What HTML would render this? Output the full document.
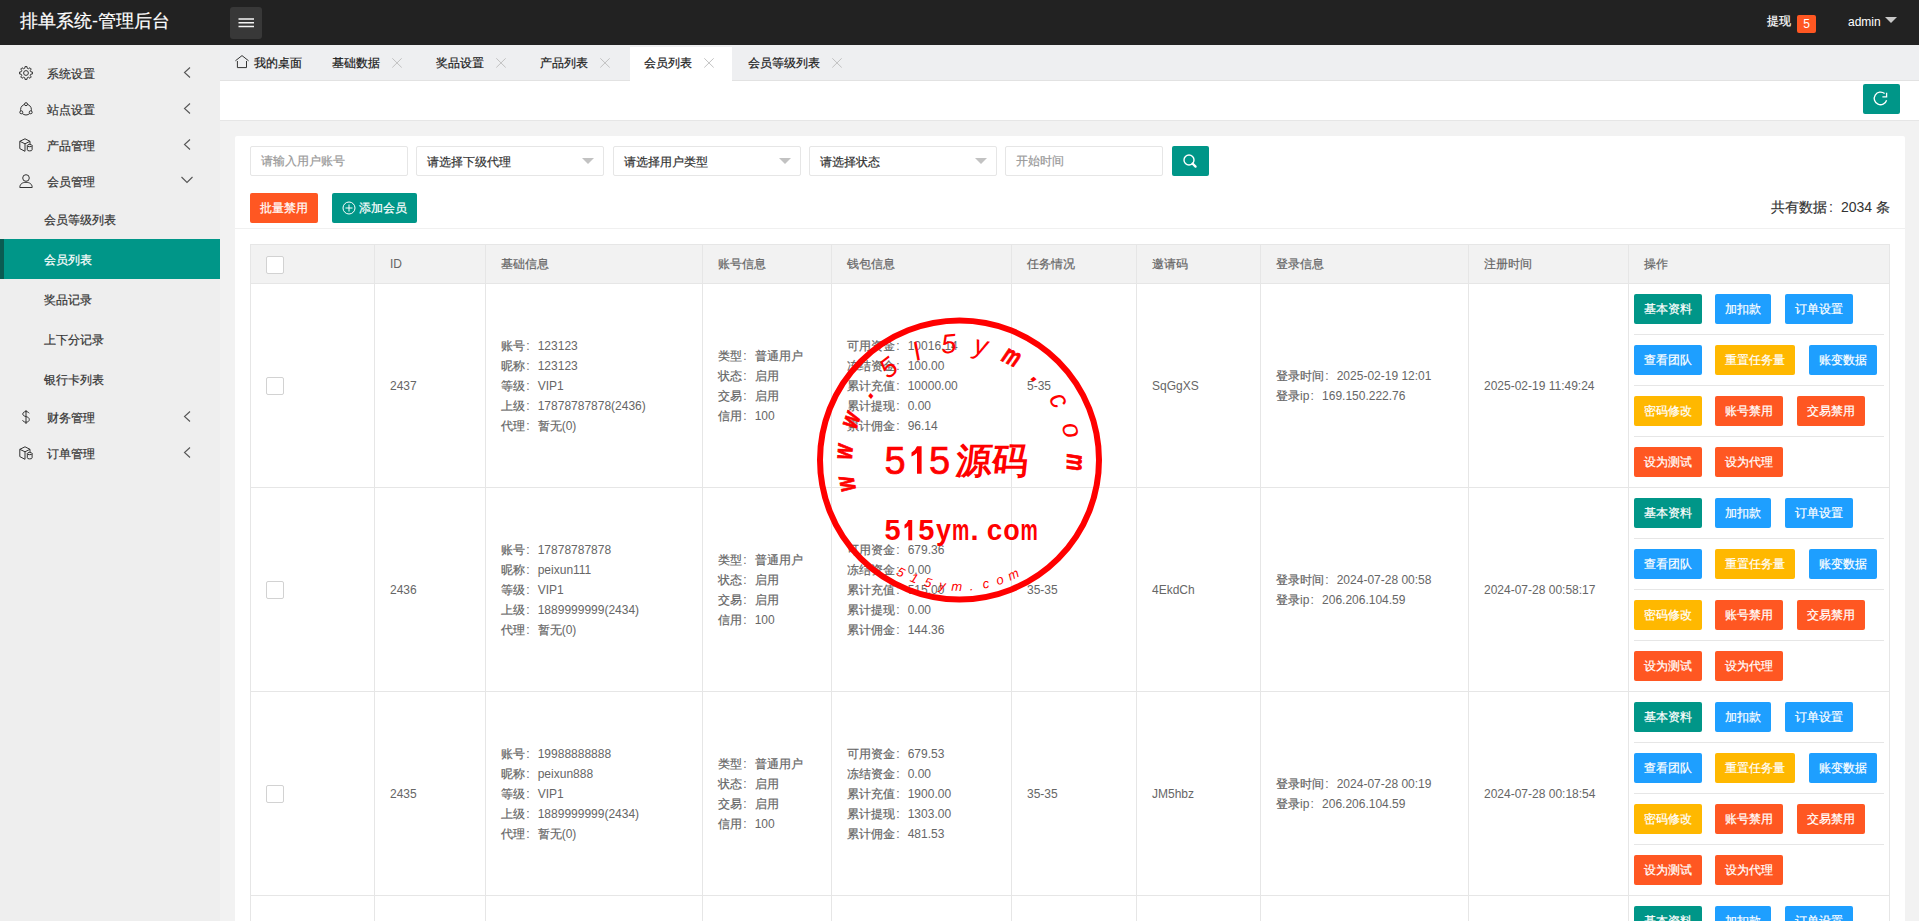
<!DOCTYPE html>
<html><head><meta charset="utf-8">
<style>
*{margin:0;padding:0;box-sizing:border-box}
html,body{width:1919px;height:921px;overflow:hidden}
body{position:relative;font-family:"Liberation Sans",sans-serif;font-size:12px;color:#666;background:#f2f2f2}
.abs{position:absolute}
.header{left:0;top:0;width:1919px;height:45px;background:#222}
.logo{left:20px;top:9px;line-height:24px;color:#fff;font-size:18px;white-space:nowrap}
.hamb{left:230px;top:7px;width:32px;height:32px;background:#383838;border-radius:3px}
.hamb i{position:absolute;left:8px;width:16px;height:2px;background:#fff}
.hr-txt{color:#fff;line-height:20px;top:11px}
.badge{left:1797px;top:15px;width:19px;height:18px;background:#FF5722;color:#fff;text-align:center;line-height:18px;border-radius:2px;font-size:12px}
.side{left:0;top:45px;width:220px;height:876px;background:#eee}
.mi{position:absolute;left:0;width:220px;height:36px;line-height:36px;color:#333}
.mi .t{position:absolute;left:47px;top:1px}
.mi svg.ic{position:absolute;left:19px;top:11px}
.mi svg.ar{position:absolute;left:183px;top:12px}
.si{position:absolute;left:0;width:220px;height:40px;line-height:40px;color:#333}
.si .t{position:absolute;left:44px;top:1px}
.si.on{background:#009688;color:#fff}
.si.on:before{content:"";position:absolute;left:0;top:0;width:4px;height:40px;background:#0a5b52}
.tabs{left:220px;top:45px;width:1699px;height:36px;background:#eeeff1;border-bottom:1px solid #e2e2e2}
.tab{position:absolute;top:1px;height:35px;line-height:34px;color:#1a1a1a;white-space:nowrap}
.tabon{position:absolute;left:410px;top:2px;width:102px;height:34px;background:#fff}
.tx{position:absolute;top:13px}
.bar{left:220px;top:81px;width:1699px;height:40px;background:#fff;border-bottom:1px solid #e6e6e6}
.refresh{left:1863px;top:84px;width:37px;height:30px;background:#009688;border-radius:2px}
.card{left:235px;top:136px;width:1670px;height:800px;background:#fff;border-radius:2px}
.inp{position:absolute;top:146px;height:30px;border:1px solid #e6e6e6;background:#fff;line-height:28px;padding-left:10px;color:#333;border-radius:2px;white-space:nowrap}
.inp.ph{color:#999}
.inp.sel{line-height:30px}
.inp .tri{position:absolute;right:9px;top:11px;width:0;height:0;border-left:6px solid transparent;border-right:6px solid transparent;border-top:6px solid #c2c2c2}
.btn{position:absolute;height:30px;line-height:30px;color:#fff;text-align:center;border-radius:2px;white-space:nowrap}
.g{background:#009688}.b{background:#1E9FFF}.o{background:#FFB800}.r{background:#FF5722}
.sep{left:235px;top:228px;width:1670px;height:1px;background:#f0f0f0}
.total{left:1500px;top:198px;width:390px;text-align:right;font-size:14px;color:#333;line-height:18px}
table{position:absolute;left:250px;top:244px;border-collapse:collapse;table-layout:fixed;width:1640px}
td,th{border:1px solid #e6e6e6;padding:0 15px;text-align:left;font-weight:normal;vertical-align:middle;line-height:20px;color:#666;font-size:12px;white-space:nowrap}
th{background:#f2f2f2;height:39px}
td{height:204px}
.cb{display:inline-block;width:18px;height:18px;border:1px solid #d2d2d2;border-radius:2px;background:#fff;vertical-align:middle}
td.ops{padding:10px 5px 0 5px;vertical-align:top}
.opr{height:51px;position:relative}
.opr:after{content:"";position:absolute;left:0;right:0;top:40px;height:1px;background:#e6e6e6}
.opr:last-child{height:30px}
.opr:last-child:after{display:none}
.opr .btn{top:0}
.stamp{left:0;top:0}
.cl{font-weight:normal;display:inline-block;width:12.7px;padding-left:1.2px;text-align:left}
.z{font-style:normal;-webkit-text-stroke:0.2px currentColor}
</style></head><body>
<div class="abs header">
  <div class="abs logo"><i class="z">排单系统</i>-<i class="z">管理后台</i></div>
  <div class="abs hamb"><svg class="abs" style="left:0;top:0" width="32" height="32" viewBox="0 0 32 32"><path d="M8.5 12H24M8.5 15.8H24M8.5 19.5H24" stroke="#fff" stroke-width="1.5" opacity="0.95"/></svg></div>
  <div class="abs hr-txt" style="left:1767px"><i class="z">提现</i></div>
  <div class="abs badge">5</div>
  <div class="abs hr-txt" style="left:1848px;top:12px">admin</div>
  <div class="abs" style="left:1885px;top:17px;width:0;height:0;border-left:6px solid transparent;border-right:6px solid transparent;border-top:6px solid #c8c8c8"></div>
</div>
<div class="abs side">
 <div class="mi" style="top:10px"><svg class="ic" width="14" height="14" viewBox="0 0 14 14"><path d="M11.87 5.88 L13.54 6.08 L13.54 7.92 L11.87 8.12 L11.24 9.65 L12.27 10.97 L10.97 12.27 L9.65 11.24 L8.12 11.87 L7.92 13.54 L6.08 13.54 L5.88 11.87 L4.35 11.24 L3.03 12.27 L1.73 10.97 L2.76 9.65 L2.13 8.12 L0.46 7.92 L0.46 6.08 L2.13 5.88 L2.76 4.35 L1.73 3.03 L3.03 1.73 L4.35 2.76 L5.88 2.13 L6.08 0.46 L7.92 0.46 L8.12 2.13 L9.65 2.76 L10.97 1.73 L12.27 3.03 L11.24 4.35Z" fill="none" stroke="#333" stroke-width="1"/><circle cx="7" cy="7" r="2.4" fill="none" stroke="#333" stroke-width="1"/></svg><span class="t"><i class="z">系统设置</i></span><svg class="ar" width="8" height="11" viewBox="0 0 8 11"><path d="M7 0.5L1.5 5.5L7 10.5" fill="none" stroke="#555" stroke-width="1.1"/></svg></div>
 <div class="mi" style="top:46px"><svg class="ic" width="14" height="14" viewBox="0 0 14 14"><circle cx="7" cy="7.6" r="5.4" fill="none" stroke="#333" stroke-width="1"/><circle cx="7" cy="2.2" r="1.5" fill="#eee" stroke="#333" stroke-width="1"/><circle cx="2.3" cy="10.3" r="1.5" fill="#eee" stroke="#333" stroke-width="1"/><circle cx="11.7" cy="10.3" r="1.5" fill="#eee" stroke="#333" stroke-width="1"/></svg><span class="t"><i class="z">站点设置</i></span><svg class="ar" width="8" height="11" viewBox="0 0 8 11"><path d="M7 0.5L1.5 5.5L7 10.5" fill="none" stroke="#555" stroke-width="1.1"/></svg></div>
 <div class="mi" style="top:82px"><svg class="ic" width="14" height="14" viewBox="0 0 14 14"><path d="M6 0.8L11 3.3L6 5.8L0.8 3.3Z M0.8 3.3V10.6L6 13.3V5.8 M11 3.3V6.5" fill="none" stroke="#333" stroke-width="1" stroke-linejoin="round"/><path d="M8.3 7.6V11.8A2.4 1.1 0 0 0 13.1 11.8V7.6" fill="#eee" stroke="#333" stroke-width="1"/><ellipse cx="10.7" cy="7.6" rx="2.4" ry="1.1" fill="#eee" stroke="#333" stroke-width="1"/></svg><span class="t"><i class="z">产品管理</i></span><svg class="ar" width="8" height="11" viewBox="0 0 8 11"><path d="M7 0.5L1.5 5.5L7 10.5" fill="none" stroke="#555" stroke-width="1.1"/></svg></div>
 <div class="mi" style="top:118px"><svg class="ic" width="14" height="14" viewBox="0 0 14 14"><circle cx="7" cy="4" r="3.3" fill="none" stroke="#333" stroke-width="1"/><path d="M0.8 13.5C0.8 9.8 3.8 8.3 7 8.3C10.2 8.3 13.2 9.8 13.2 13.5Z" fill="none" stroke="#333" stroke-width="1" stroke-linejoin="round"/></svg><span class="t"><i class="z">会员管理</i></span><svg class="ar" width="12" height="8" viewBox="0 0 12 8" style="left:181px;top:13px"><path d="M0.5 1L6 6.5L11.5 1" fill="none" stroke="#555" stroke-width="1.1"/></svg></div>
 <div class="si" style="top:154px"><span class="t"><i class="z">会员等级列表</i></span></div>
 <div class="si on" style="top:194px"><span class="t"><i class="z">会员列表</i></span></div>
 <div class="si" style="top:234px"><span class="t"><i class="z">奖品记录</i></span></div>
 <div class="si" style="top:274px"><span class="t"><i class="z">上下分记录</i></span></div>
 <div class="si" style="top:314px"><span class="t"><i class="z">银行卡列表</i></span></div>
 <div class="mi" style="top:354px"><svg class="ic" width="14" height="14" viewBox="0 0 14 14"><path d="M10.2 3.3C9.6 2.2 8.4 1.6 7 1.6C5.1 1.6 3.8 2.6 3.8 4C3.8 5.5 5.2 6.1 7 6.6C8.9 7.1 10.3 7.8 10.3 9.6C10.3 11.1 8.9 12.2 7 12.2C5.3 12.2 4 11.4 3.6 10.2M7 0V14" fill="none" stroke="#333" stroke-width="1"/></svg><span class="t"><i class="z">财务管理</i></span><svg class="ar" width="8" height="11" viewBox="0 0 8 11"><path d="M7 0.5L1.5 5.5L7 10.5" fill="none" stroke="#555" stroke-width="1.1"/></svg></div>
 <div class="mi" style="top:390px"><svg class="ic" width="14" height="14" viewBox="0 0 14 14"><path d="M6 0.8L11 3.3L6 5.8L0.8 3.3Z M0.8 3.3V10.6L6 13.3V5.8 M11 3.3V6.5" fill="none" stroke="#333" stroke-width="1" stroke-linejoin="round"/><path d="M8.3 7.6V11.8A2.4 1.1 0 0 0 13.1 11.8V7.6" fill="#eee" stroke="#333" stroke-width="1"/><ellipse cx="10.7" cy="7.6" rx="2.4" ry="1.1" fill="#eee" stroke="#333" stroke-width="1"/></svg><span class="t"><i class="z">订单管理</i></span><svg class="ar" width="8" height="11" viewBox="0 0 8 11"><path d="M7 0.5L1.5 5.5L7 10.5" fill="none" stroke="#555" stroke-width="1.1"/></svg></div>
</div>
<div class="abs tabs">
 <div class="tabon"></div>
 <svg class="abs" style="left:15px;top:10px" width="14" height="14" viewBox="0 0 14 14"><path d="M0.4 5.8L7 0.6L13.6 5.8M2.4 6V12.6H11.5V6" fill="none" stroke="#333" stroke-width="1"/></svg>
 <span class="tab" style="left:34px"><i class="z">我的桌面</i></span>
 <span class="tab" style="left:112px"><i class="z">基础数据</i></span><svg class="abs tx" style="left:172px" width="10" height="10" viewBox="0 0 10 10"><path d="M0.3 0.3L9.7 9.5M9.7 0.3L0.3 9.5" stroke="#bbb" stroke-width="0.9"/></svg>
 <span class="tab" style="left:216px"><i class="z">奖品设置</i></span><svg class="abs tx" style="left:276px" width="10" height="10" viewBox="0 0 10 10"><path d="M0.3 0.3L9.7 9.5M9.7 0.3L0.3 9.5" stroke="#bbb" stroke-width="0.9"/></svg>
 <span class="tab" style="left:320px"><i class="z">产品列表</i></span><svg class="abs tx" style="left:380px" width="10" height="10" viewBox="0 0 10 10"><path d="M0.3 0.3L9.7 9.5M9.7 0.3L0.3 9.5" stroke="#bbb" stroke-width="0.9"/></svg>
 <span class="tab" style="left:424px"><i class="z">会员列表</i></span><svg class="abs tx" style="left:484px" width="10" height="10" viewBox="0 0 10 10"><path d="M0.3 0.3L9.7 9.5M9.7 0.3L0.3 9.5" stroke="#bbb" stroke-width="0.9"/></svg>
 <span class="tab" style="left:528px"><i class="z">会员等级列表</i></span><svg class="abs tx" style="left:612px" width="10" height="10" viewBox="0 0 10 10"><path d="M0.3 0.3L9.7 9.5M9.7 0.3L0.3 9.5" stroke="#bbb" stroke-width="0.9"/></svg>
</div>
<div class="abs bar"></div>
<div class="abs refresh"><svg class="abs" style="left:0;top:0" width="37" height="30" viewBox="0 0 37 30"><path d="M23.6 16.2A6.3 6.3 0 1 1 21.6 9.6" fill="none" stroke="#fff" stroke-width="1.3"/><path d="M23.6 8.8V12.8H19.4" fill="none" stroke="#fff" stroke-width="1.3"/></svg></div>
<div class="abs card"></div>
<div class="inp ph" style="left:250px;width:158px"><i class="z">请输入用户账号</i></div>
<div class="inp sel" style="left:416px;width:188px"><i class="z">请选择下级代理</i><i class="tri"></i></div>
<div class="inp sel" style="left:613px;width:188px"><i class="z">请选择用户类型</i><i class="tri"></i></div>
<div class="inp sel" style="left:809px;width:188px"><i class="z">请选择状态</i><i class="tri"></i></div>
<div class="inp ph" style="left:1005px;width:158px"><i class="z">开始时间</i></div>
<div class="btn g" style="left:1172px;top:146px;width:37px"><svg class="abs" style="left:10px;top:7px" width="16" height="16" viewBox="0 0 16 16"><circle cx="7" cy="7" r="5" fill="none" stroke="#fff" stroke-width="1.4"/><path d="M10.6 10.6L13.6 13.6" stroke="#fff" stroke-width="2.2" stroke-linecap="round"/></svg></div>
<div class="btn r" style="left:250px;top:193px;width:68px"><i class="z">批量禁用</i></div>
<div class="btn g" style="left:332px;top:193px;width:85px"><svg class="abs" style="left:10px;top:8px" width="14" height="14" viewBox="0 0 14 14"><circle cx="7" cy="7" r="6" fill="none" stroke="#fff" stroke-width="1"/><path d="M7 3.5V10.5M3.5 7H10.5" stroke="#fff" stroke-width="1"/></svg><span style="position:absolute;left:27px"><i class="z">添加会员</i></span></div>
<div class="abs sep"></div>
<div class="abs total"><i class="z">共有数据</i><b class="cl" style="width:14px;padding-left:2px">:</b>2034 <i class="z">条</i></div>
<table>
<colgroup><col style="width:124px"><col style="width:111px"><col style="width:217px"><col style="width:129px"><col style="width:180px"><col style="width:125px"><col style="width:124px"><col style="width:208px"><col style="width:160px"><col style="width:261px"></colgroup>
<tr><th><span class="cb"></span></th><th>ID</th><th><i class="z">基础信息</i></th><th><i class="z">账号信息</i></th><th><i class="z">钱包信息</i></th><th><i class="z">任务情况</i></th><th><i class="z">邀请码</i></th><th><i class="z">登录信息</i></th><th><i class="z">注册时间</i></th><th><i class="z">操作</i></th></tr>
<tr><td><span class="cb"></span></td><td>2437</td><td><i class="z">账号</i><b class="cl">:</b>123123<br><i class="z">昵称</i><b class="cl">:</b>123123<br><i class="z">等级</i><b class="cl">:</b>VIP1<br><i class="z">上级</i><b class="cl">:</b>17878787878(2436)<br><i class="z">代理</i><b class="cl">:</b><i class="z">暂无</i>(0)</td><td><i class="z">类型</i><b class="cl">:</b><i class="z">普通用户</i><br><i class="z">状态</i><b class="cl">:</b><i class="z">启用</i><br><i class="z">交易</i><b class="cl">:</b><i class="z">启用</i><br><i class="z">信用</i><b class="cl">:</b>100</td><td><i class="z">可用资金</i><b class="cl">:</b>10016.14<br><i class="z">冻结资金</i><b class="cl">:</b>100.00<br><i class="z">累计充值</i><b class="cl">:</b>10000.00<br><i class="z">累计提现</i><b class="cl">:</b>0.00<br><i class="z">累计佣金</i><b class="cl">:</b>96.14</td><td>5-35</td><td>SqGgXS</td><td><i class="z">登录时间</i><b class="cl">:</b>2025-02-19 12:01<br><i class="z">登录</i>ip<b class="cl">:</b>169.150.222.76</td><td>2025-02-19 11:49:24</td><td class="ops"><div class="opr"><span class="btn g" style="left:0;width:68px"><i class="z">基本资料</i></span><span class="btn b" style="left:81px;width:56px"><i class="z">加扣款</i></span><span class="btn b" style="left:151px;width:68px"><i class="z">订单设置</i></span></div><div class="opr"><span class="btn b" style="left:0;width:68px"><i class="z">查看团队</i></span><span class="btn o" style="left:81px;width:80px"><i class="z">重置任务量</i></span><span class="btn b" style="left:175px;width:68px"><i class="z">账变数据</i></span></div><div class="opr"><span class="btn o" style="left:0;width:68px"><i class="z">密码修改</i></span><span class="btn r" style="left:81px;width:68px"><i class="z">账号禁用</i></span><span class="btn r" style="left:163px;width:68px"><i class="z">交易禁用</i></span></div><div class="opr"><span class="btn r" style="left:0;width:68px"><i class="z">设为测试</i></span><span class="btn r" style="left:81px;width:68px"><i class="z">设为代理</i></span></div></td></tr>
<tr><td><span class="cb"></span></td><td>2436</td><td><i class="z">账号</i><b class="cl">:</b>17878787878<br><i class="z">昵称</i><b class="cl">:</b>peixun111<br><i class="z">等级</i><b class="cl">:</b>VIP1<br><i class="z">上级</i><b class="cl">:</b>1889999999(2434)<br><i class="z">代理</i><b class="cl">:</b><i class="z">暂无</i>(0)</td><td><i class="z">类型</i><b class="cl">:</b><i class="z">普通用户</i><br><i class="z">状态</i><b class="cl">:</b><i class="z">启用</i><br><i class="z">交易</i><b class="cl">:</b><i class="z">启用</i><br><i class="z">信用</i><b class="cl">:</b>100</td><td><i class="z">可用资金</i><b class="cl">:</b>679.36<br><i class="z">冻结资金</i><b class="cl">:</b>0.00<br><i class="z">累计充值</i><b class="cl">:</b>515.00<br><i class="z">累计提现</i><b class="cl">:</b>0.00<br><i class="z">累计佣金</i><b class="cl">:</b>144.36</td><td>35-35</td><td>4EkdCh</td><td><i class="z">登录时间</i><b class="cl">:</b>2024-07-28 00:58<br><i class="z">登录</i>ip<b class="cl">:</b>206.206.104.59</td><td>2024-07-28 00:58:17</td><td class="ops"><div class="opr"><span class="btn g" style="left:0;width:68px"><i class="z">基本资料</i></span><span class="btn b" style="left:81px;width:56px"><i class="z">加扣款</i></span><span class="btn b" style="left:151px;width:68px"><i class="z">订单设置</i></span></div><div class="opr"><span class="btn b" style="left:0;width:68px"><i class="z">查看团队</i></span><span class="btn o" style="left:81px;width:80px"><i class="z">重置任务量</i></span><span class="btn b" style="left:175px;width:68px"><i class="z">账变数据</i></span></div><div class="opr"><span class="btn o" style="left:0;width:68px"><i class="z">密码修改</i></span><span class="btn r" style="left:81px;width:68px"><i class="z">账号禁用</i></span><span class="btn r" style="left:163px;width:68px"><i class="z">交易禁用</i></span></div><div class="opr"><span class="btn r" style="left:0;width:68px"><i class="z">设为测试</i></span><span class="btn r" style="left:81px;width:68px"><i class="z">设为代理</i></span></div></td></tr>
<tr><td><span class="cb"></span></td><td>2435</td><td><i class="z">账号</i><b class="cl">:</b>19988888888<br><i class="z">昵称</i><b class="cl">:</b>peixun888<br><i class="z">等级</i><b class="cl">:</b>VIP1<br><i class="z">上级</i><b class="cl">:</b>1889999999(2434)<br><i class="z">代理</i><b class="cl">:</b><i class="z">暂无</i>(0)</td><td><i class="z">类型</i><b class="cl">:</b><i class="z">普通用户</i><br><i class="z">状态</i><b class="cl">:</b><i class="z">启用</i><br><i class="z">交易</i><b class="cl">:</b><i class="z">启用</i><br><i class="z">信用</i><b class="cl">:</b>100</td><td><i class="z">可用资金</i><b class="cl">:</b>679.53<br><i class="z">冻结资金</i><b class="cl">:</b>0.00<br><i class="z">累计充值</i><b class="cl">:</b>1900.00<br><i class="z">累计提现</i><b class="cl">:</b>1303.00<br><i class="z">累计佣金</i><b class="cl">:</b>481.53</td><td>35-35</td><td>JM5hbz</td><td><i class="z">登录时间</i><b class="cl">:</b>2024-07-28 00:19<br><i class="z">登录</i>ip<b class="cl">:</b>206.206.104.59</td><td>2024-07-28 00:18:54</td><td class="ops"><div class="opr"><span class="btn g" style="left:0;width:68px"><i class="z">基本资料</i></span><span class="btn b" style="left:81px;width:56px"><i class="z">加扣款</i></span><span class="btn b" style="left:151px;width:68px"><i class="z">订单设置</i></span></div><div class="opr"><span class="btn b" style="left:0;width:68px"><i class="z">查看团队</i></span><span class="btn o" style="left:81px;width:80px"><i class="z">重置任务量</i></span><span class="btn b" style="left:175px;width:68px"><i class="z">账变数据</i></span></div><div class="opr"><span class="btn o" style="left:0;width:68px"><i class="z">密码修改</i></span><span class="btn r" style="left:81px;width:68px"><i class="z">账号禁用</i></span><span class="btn r" style="left:163px;width:68px"><i class="z">交易禁用</i></span></div><div class="opr"><span class="btn r" style="left:0;width:68px"><i class="z">设为测试</i></span><span class="btn r" style="left:81px;width:68px"><i class="z">设为代理</i></span></div></td></tr>
<tr><td><span class="cb"></span></td><td>2434</td><td><i class="z">账号</i><b class="cl">:</b>1889999999<br><i class="z">昵称</i><b class="cl">:</b>peixun<br><i class="z">等级</i><b class="cl">:</b>VIP1<br><i class="z">上级</i><b class="cl">:</b><i class="z">暂无</i><br><i class="z">代理</i><b class="cl">:</b><i class="z">暂无</i>(0)</td><td><i class="z">类型</i><b class="cl">:</b><i class="z">普通用户</i><br><i class="z">状态</i><b class="cl">:</b><i class="z">启用</i><br><i class="z">交易</i><b class="cl">:</b><i class="z">启用</i><br><i class="z">信用</i><b class="cl">:</b>100</td><td><i class="z">可用资金</i><b class="cl">:</b>0.00<br><i class="z">冻结资金</i><b class="cl">:</b>0.00<br><i class="z">累计充值</i><b class="cl">:</b>0.00<br><i class="z">累计提现</i><b class="cl">:</b>0.00<br><i class="z">累计佣金</i><b class="cl">:</b>0.00</td><td>0-35</td><td>AbCdEf</td><td><i class="z">登录时间</i><b class="cl">:</b>2024-07-28 00:10<br><i class="z">登录</i>ip<b class="cl">:</b>206.206.104.59</td><td>2024-07-28 00:10:00</td><td class="ops"><div class="opr"><span class="btn g" style="left:0;width:68px"><i class="z">基本资料</i></span><span class="btn b" style="left:81px;width:56px"><i class="z">加扣款</i></span><span class="btn b" style="left:151px;width:68px"><i class="z">订单设置</i></span></div><div class="opr"><span class="btn b" style="left:0;width:68px"><i class="z">查看团队</i></span><span class="btn o" style="left:81px;width:80px"><i class="z">重置任务量</i></span><span class="btn b" style="left:175px;width:68px"><i class="z">账变数据</i></span></div><div class="opr"><span class="btn o" style="left:0;width:68px"><i class="z">密码修改</i></span><span class="btn r" style="left:81px;width:68px"><i class="z">账号禁用</i></span><span class="btn r" style="left:163px;width:68px"><i class="z">交易禁用</i></span></div><div class="opr"><span class="btn r" style="left:0;width:68px"><i class="z">设为测试</i></span><span class="btn r" style="left:81px;width:68px"><i class="z">设为代理</i></span></div></td></tr>
</table><svg class="abs" style="left:0;top:0;pointer-events:none" width="1919" height="921" viewBox="0 0 1919 921">
<circle cx="959.5" cy="460.0" r="139.5" fill="none" stroke="#f00" stroke-width="6"/>
<text transform="translate(854.35 482.35) rotate(258.00) scale(0.70 1)" text-anchor="middle" font-family="Liberation Sans" font-style="italic" font-weight="bold" font-size="27" fill="#f00" stroke="#f00" stroke-width="0.9">w</text>
<text transform="translate(852.28 452.31) rotate(274.10) scale(0.70 1)" text-anchor="middle" font-family="Liberation Sans" font-style="italic" font-weight="bold" font-size="27" fill="#f00" stroke="#f00" stroke-width="0.9">w</text>
<text transform="translate(858.61 422.88) rotate(290.20) scale(0.70 1)" text-anchor="middle" font-family="Liberation Sans" font-style="italic" font-weight="bold" font-size="27" fill="#f00" stroke="#f00" stroke-width="0.9">w</text>
<text transform="translate(872.86 396.36) rotate(306.30) scale(1.00 1)" text-anchor="middle" font-family="Liberation Sans" font-style="italic" font-weight="bold" font-size="27" fill="#f00">.</text>
<text transform="translate(893.91 374.83) rotate(322.40) scale(1.00 1)" text-anchor="middle" font-family="Liberation Sans" font-style="italic" font-weight="normal" font-size="27" fill="#f00">5</text>
<text transform="translate(920.10 359.98) rotate(338.50) scale(1.00 1)" text-anchor="middle" font-family="Liberation Sans" font-style="italic" font-weight="normal" font-size="27" fill="#f00">I</text>
<text transform="translate(949.38 352.98) rotate(354.60) scale(1.00 1)" text-anchor="middle" font-family="Liberation Sans" font-style="italic" font-weight="normal" font-size="27" fill="#f00">5</text>
<text transform="translate(979.46 354.37) rotate(370.70) scale(1.00 1)" text-anchor="middle" font-family="Liberation Sans" font-style="italic" font-weight="normal" font-size="27" fill="#f00">y</text>
<text transform="translate(1007.97 364.05) rotate(386.80) scale(0.70 1)" text-anchor="middle" font-family="Liberation Sans" font-style="italic" font-weight="bold" font-size="27" fill="#f00" stroke="#f00" stroke-width="0.9">m</text>
<text transform="translate(1032.68 381.25) rotate(402.90) scale(1.00 1)" text-anchor="middle" font-family="Liberation Sans" font-style="italic" font-weight="bold" font-size="27" fill="#f00">.</text>
<text transform="translate(1051.65 404.63) rotate(419.00) scale(1.00 1)" text-anchor="middle" font-family="Liberation Sans" font-style="italic" font-weight="normal" font-size="27" fill="#f00">c</text>
<text transform="translate(1063.39 432.36) rotate(435.10) scale(1.00 1)" text-anchor="middle" font-family="Liberation Sans" font-style="italic" font-weight="normal" font-size="27" fill="#f00">o</text>
<text transform="translate(1066.98 462.25) rotate(451.20) scale(0.70 1)" text-anchor="middle" font-family="Liberation Sans" font-style="italic" font-weight="bold" font-size="27" fill="#f00" stroke="#f00" stroke-width="0.9">m</text>
<text x="884.6" y="473.6" font-family="Liberation Sans" font-size="38" fill="#f00" stroke="#f00" stroke-width="0.7">5</text>
<path d="M917 446.3H921.6V473.8H917V453Q914.6 455.2 911.5 456.6V452.4Q915.6 450.2 917 446.3Z" fill="#f00"/>
<text x="929" y="473.6" font-family="Liberation Sans" font-size="38" fill="#f00" stroke="#f00" stroke-width="0.7">5</text>
<text x="955" y="473" font-family="Liberation Serif" font-size="36" font-weight="bold" fill="#f00" transform="translate(0 473) skewX(-6) translate(0 -473)">源码</text>
<text transform="translate(892.5 540.3) scale(1.00 1)" text-anchor="middle" font-family="Liberation Sans" font-weight="bold" font-size="29" fill="#f00">5</text>
<path d="M908.3 520H912.2V540.3H908.3V526Q906.5 527.6 904.5 528.4V524.8Q907 523.5 908.3 520Z" fill="#f00"/>
<text transform="translate(926.3 540.3) scale(1.00 1)" text-anchor="middle" font-family="Liberation Sans" font-weight="bold" font-size="29" fill="#f00">5</text>
<text transform="translate(943.4 540.3) scale(0.93 1)" text-anchor="middle" font-family="Liberation Sans" font-weight="bold" font-size="29" fill="#f00">y</text>
<text transform="translate(960.6 540.3) scale(0.67 1)" text-anchor="middle" font-family="Liberation Sans" font-weight="bold" font-size="29" fill="#f00">m</text>
<text transform="translate(974.6 540.3) scale(1.00 1)" text-anchor="middle" font-family="Liberation Sans" font-weight="bold" font-size="29" fill="#f00">.</text>
<text transform="translate(994.6 540.3) scale(0.96 1)" text-anchor="middle" font-family="Liberation Sans" font-weight="bold" font-size="29" fill="#f00">c</text>
<text transform="translate(1011.6 540.3) scale(0.93 1)" text-anchor="middle" font-family="Liberation Sans" font-weight="bold" font-size="29" fill="#f00">o</text>
<text transform="translate(1029.2 540.3) scale(0.67 1)" text-anchor="middle" font-family="Liberation Sans" font-weight="bold" font-size="29" fill="#f00">m</text>
<text transform="translate(898.81 576.09) rotate(27.60)" text-anchor="middle" font-family="Liberation Sans" font-style="italic" font-size="13" fill="#f00">5</text>
<text transform="translate(912.55 582.30) rotate(21.00)" text-anchor="middle" font-family="Liberation Sans" font-style="italic" font-size="13" fill="#f00">1</text>
<text transform="translate(926.92 586.88) rotate(14.40)" text-anchor="middle" font-family="Liberation Sans" font-style="italic" font-size="13" fill="#f00">5</text>
<text transform="translate(941.72 589.79) rotate(7.80)" text-anchor="middle" font-family="Liberation Sans" font-style="italic" font-size="13" fill="#f00">y</text>
<text transform="translate(956.76 590.97) rotate(1.20)" text-anchor="middle" font-family="Liberation Sans" font-style="italic" font-size="13" fill="#f00">m</text>
<text transform="translate(971.83 590.42) rotate(-5.40)" text-anchor="middle" font-family="Liberation Sans" font-style="italic" font-size="13" fill="#f00">.</text>
<text transform="translate(986.74 588.14) rotate(-12.00)" text-anchor="middle" font-family="Liberation Sans" font-style="italic" font-size="13" fill="#f00">c</text>
<text transform="translate(1001.28 584.16) rotate(-18.60)" text-anchor="middle" font-family="Liberation Sans" font-style="italic" font-size="13" fill="#f00">o</text>
<text transform="translate(1015.28 578.53) rotate(-25.20)" text-anchor="middle" font-family="Liberation Sans" font-style="italic" font-size="13" fill="#f00">m</text>
</svg>
</body></html>
